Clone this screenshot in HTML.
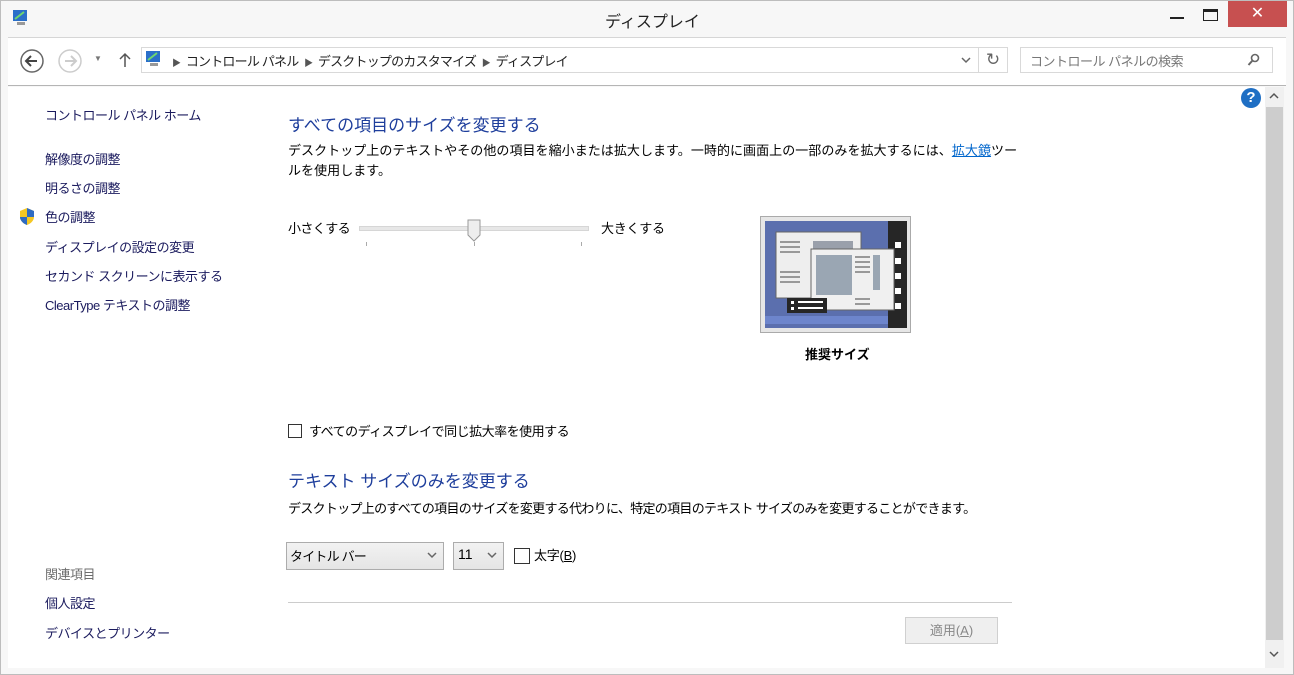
<!DOCTYPE html>
<html><head><meta charset="utf-8"><style>
*{box-sizing:border-box;margin:0;padding:0}
body{width:1294px;height:675px;overflow:hidden;background:#f4f4f4;font-family:"Liberation Sans","Noto Sans CJK JP",sans-serif;font-size:13px;color:#000;position:relative}
.abs{position:absolute}
.win{left:0;top:0;width:1294px;height:675px;border:1px solid #bdbdbd;background:#f7f7f7}
.nav a{position:absolute;left:45px;color:#1b1b5e;font-size:13px;letter-spacing:-0.5px;text-decoration:none;white-space:nowrap}
.t{position:absolute;white-space:nowrap}
.b{font-size:13px;letter-spacing:-0.25px}
</style></head><body>
<div class="abs win"></div>
<svg class="abs" style="left:12px;top:9px" width="18" height="18"><rect x="1" y="1" width="14" height="11" fill="#2a6fc9"/><path d="M3 10 L12 3" stroke="#6fd66f" stroke-width="2"/><rect x="5" y="13" width="8" height="3" fill="#999"/></svg>
<div class="t" style="left:605px;top:8px;font-size:16px;color:#222">ディスプレイ</div>
<div class="abs" style="left:1170px;top:17px;width:14px;height:2px;background:#222"></div>
<div class="abs" style="left:1203px;top:9px;width:15px;height:12px;border:1px solid #222;border-top-width:3px"></div>
<div class="abs" style="left:1228px;top:1px;width:59px;height:26px;background:#c75050;color:#fff;font-size:16px;text-align:center;line-height:26px">✕</div>
<div class="abs" style="left:8px;top:37px;width:1278px;height:49px;background:#fff;border-top:1px solid #d6d6d6;border-bottom:1px solid #b5b5b5"></div>
<svg class="abs" style="left:19px;top:48px" width="26" height="26"><circle cx="13" cy="13" r="11" fill="none" stroke="#666" stroke-width="1.5"/><path d="M18 13H8M12 8L7 13L12 18" fill="none" stroke="#444" stroke-width="2"/></svg>
<svg class="abs" style="left:57px;top:48px" width="26" height="26"><circle cx="13" cy="13" r="11" fill="none" stroke="#ccc" stroke-width="1.5"/><path d="M8 13H18M14 8L19 13L14 18" fill="none" stroke="#ccc" stroke-width="2"/></svg>
<div class="t" style="left:94px;top:54px;font-size:8px;color:#777">▼</div>
<svg class="abs" style="left:118px;top:52px" width="14" height="16"><path d="M7 15V2M2 7L7 2L12 7" fill="none" stroke="#555" stroke-width="1.5"/></svg>
<div class="abs" style="left:141px;top:47px;width:838px;height:26px;border:1px solid #d9d9d9"></div>
<div class="abs" style="left:979px;top:47px;width:29px;height:26px;border:1px solid #d9d9d9;border-left:none;text-align:center;color:#666;font-size:17px;line-height:24px">↻</div>
<svg class="abs" style="left:145px;top:50px" width="18" height="18"><rect x="1" y="1" width="14" height="11" fill="#2a6fc9"/><path d="M3 10 L12 3" stroke="#6fd66f" stroke-width="2"/><rect x="5" y="13" width="8" height="3" fill="#999"/></svg>
<div class="t" style="left:172px;top:51px;font-size:13px;letter-spacing:-0.8px;color:#222"><span style="font-size:9px;color:#555">▶</span> &nbsp;コントロール パネル &nbsp;<span style="font-size:9px;color:#555">▶</span> &nbsp;デスクトップのカスタマイズ &nbsp;<span style="font-size:9px;color:#555">▶</span> &nbsp;ディスプレイ</div>
<svg class="abs" style="left:961px;top:57px" width="10" height="8"><path d="M1 1L5 5L9 1" fill="none" stroke="#666" stroke-width="1.5"/></svg>
<div class="abs" style="left:1020px;top:47px;width:253px;height:26px;border:1px solid #d9d9d9"></div>
<div class="t" style="left:1030px;top:51px;font-size:13px;letter-spacing:-0.5px;color:#777">コントロール パネルの検索</div>
<svg class="abs" style="left:1247px;top:53px" width="14" height="14"><circle cx="8" cy="5" r="3.5" fill="none" stroke="#666" stroke-width="1.6"/><path d="M5.5 7.5L1.5 12" stroke="#666" stroke-width="2"/></svg>
<div class="abs" style="left:8px;top:87px;width:1257px;height:581px;background:#fff"></div>
<div class="abs" style="left:1265px;top:87px;width:19px;height:581px;background:#f0f0f0"></div>
<div class="abs" style="left:1266px;top:107px;width:17px;height:533px;background:#cdcdcd"></div>
<svg class="abs" style="left:1269px;top:92px" width="10" height="8"><path d="M1 6L5 2L9 6" fill="none" stroke="#555" stroke-width="1.5"/></svg>
<svg class="abs" style="left:1269px;top:650px" width="10" height="8"><path d="M1 2L5 6L9 2" fill="none" stroke="#555" stroke-width="1.5"/></svg>
<div class="abs" style="left:1241px;top:88px;width:20px;height:20px;border-radius:50%;background:#1f6fc4;color:#fff;font-weight:bold;text-align:center;line-height:20px;font-size:15px">?</div>
<div class="nav">
<a style="top:105px">コントロール パネル ホーム</a>
<a style="top:149px">解像度の調整</a>
<a style="top:178px">明るさの調整</a>
<a style="top:207px">色の調整</a>
<a style="top:237px">ディスプレイの設定の変更</a>
<a style="top:266px">セカンド スクリーンに表示する</a>
<a style="top:295px">ClearType テキストの調整</a>
<a style="top:564px;color:#6d6d6d">関連項目</a>
<a style="top:593px">個人設定</a>
<a style="top:623px">デバイスとプリンター</a>
</div>
<svg class="abs" style="left:18px;top:207px" width="18" height="19"><path d="M9 1L16 4V10C16 14 12 17 9 18C6 17 2 14 2 10V4Z" fill="#f5c723"/><path d="M9 1L16 4V10H9ZM9 10H2C2 14 6 17 9 18Z" fill="#2f6bc2"/></svg>
<div class="t" style="left:288px;top:111px;font-size:17px;color:#1e3e9c">すべての項目のサイズを変更する</div>
<div class="t b" style="left:288px;top:141px;line-height:20px;letter-spacing:0.05px">デスクトップ上のテキストやその他の項目を縮小または拡大します。一時的に画面上の一部のみを拡大するには、<span style="color:#0066cc;text-decoration:underline">拡大鏡</span>ツー<br>ルを使用します。</div>
<div class="t b" style="left:288px;top:218px;letter-spacing:-0.6px">小さくする</div>
<div class="t b" style="left:601px;top:218px">大きくする</div>
<div class="abs" style="left:359px;top:226px;width:230px;height:5px;background:#e7e7e7;border:1px solid #d6d6d6"></div>
<svg class="abs" style="left:467px;top:219px" width="14" height="23"><path d="M1 1H13V16L7 22L1 16Z" fill="#eee" stroke="#999"/></svg>
<div class="abs" style="left:366px;top:242px;width:1px;height:4px;background:#aaa"></div>
<div class="abs" style="left:474px;top:242px;width:1px;height:4px;background:#aaa"></div>
<div class="abs" style="left:581px;top:242px;width:1px;height:4px;background:#aaa"></div>
<svg class="abs" style="left:760px;top:216px" width="152" height="117">
<rect x="0.5" y="0.5" width="150" height="116" fill="#e6e6e6" stroke="#aaa"/>
<rect x="5" y="5" width="142" height="107" fill="#5b6fae"/>
<rect x="5" y="100" width="123" height="8" fill="#6d85cc"/>
<rect x="128" y="5" width="19" height="107" fill="#262626"/>
<g fill="#fff"><rect x="135" y="26" width="6" height="6"/><rect x="135" y="42" width="6" height="6"/><rect x="135" y="57" width="6" height="6"/><rect x="135" y="72" width="6" height="6"/><rect x="135" y="87" width="6" height="6"/></g>
<rect x="16" y="16" width="85" height="66" fill="#eee" stroke="#666"/>
<g fill="#999"><rect x="20" y="25" width="20" height="2"/><rect x="20" y="30" width="20" height="2"/><rect x="20" y="35" width="20" height="2"/><rect x="20" y="55" width="20" height="2"/><rect x="20" y="60" width="20" height="2"/><rect x="20" y="65" width="20" height="2"/></g>
<rect x="53" y="25" width="40" height="45" fill="#9aa0ab"/>
<rect x="51" y="33" width="83" height="61" fill="#f0f0f0" stroke="#666"/>
<rect x="56" y="39" width="36" height="40" fill="#9aa6b3"/>
<g fill="#999"><rect x="95" y="40" width="15" height="2"/><rect x="95" y="45" width="15" height="2"/><rect x="95" y="50" width="15" height="2"/><rect x="95" y="55" width="15" height="2"/><rect x="95" y="82" width="15" height="2"/><rect x="95" y="87" width="15" height="2"/></g>
<rect x="113" y="39" width="7" height="35" fill="#9aa6b3"/>
<rect x="27" y="82" width="40" height="15" fill="#262626"/>
<g fill="#fff"><rect x="31" y="85" width="3" height="3"/><rect x="31" y="91" width="3" height="3"/><rect x="38" y="85" width="25" height="2"/><rect x="38" y="91" width="25" height="2"/></g>
</svg>
<div class="t" style="left:805px;top:344px;font-weight:bold;font-size:13px">推奨サイズ</div>
<div class="abs" style="left:288px;top:424px;width:14px;height:14px;border:1px solid #333;background:#fff"></div>
<div class="t b" style="left:309px;top:421px;letter-spacing:-0.5px">すべてのディスプレイで同じ拡大率を使用する</div>
<div class="t" style="left:288px;top:467px;font-size:17px;color:#1e3e9c">テキスト サイズのみを変更する</div>
<div class="t b" style="left:288px;top:498px;letter-spacing:-0.7px">デスクトップ上のすべての項目のサイズを変更する代わりに、特定の項目のテキスト サイズのみを変更することができます。</div>
<div class="abs" style="left:286px;top:542px;width:158px;height:28px;border:1px solid #acacac;background:linear-gradient(#f2f2f2,#e5e5e5)"></div>
<div class="t b" style="left:290px;top:546px;letter-spacing:-0.8px">タイトル バー</div>
<svg class="abs" style="left:427px;top:552px" width="10" height="8"><path d="M1 1L5 5L9 1" fill="none" stroke="#666" stroke-width="1.5"/></svg>
<div class="abs" style="left:453px;top:542px;width:51px;height:28px;border:1px solid #acacac;background:linear-gradient(#f2f2f2,#e5e5e5)"></div>
<div class="t" style="left:458px;top:546px;font-size:14px">11</div>
<svg class="abs" style="left:487px;top:552px" width="10" height="8"><path d="M1 1L5 5L9 1" fill="none" stroke="#666" stroke-width="1.5"/></svg>
<div class="abs" style="left:514px;top:548px;width:16px;height:16px;border:1px solid #333;background:#fff"></div>
<div class="t b" style="left:534px;top:545px">太字(<u>B</u>)</div>
<div class="abs" style="left:288px;top:602px;width:724px;height:1px;background:#ccc"></div>
<div class="abs" style="left:905px;top:617px;width:93px;height:27px;border:1px solid #d0d0d0;background:#efefef;color:#888;text-align:center;line-height:25px;font-size:13px">適用(<u>A</u>)</div>
</body></html>
